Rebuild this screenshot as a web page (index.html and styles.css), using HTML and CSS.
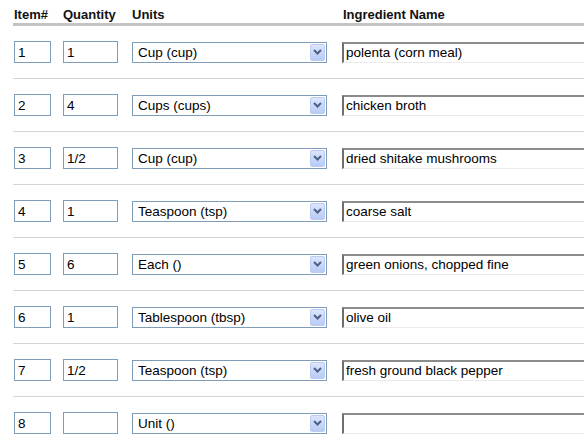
FILE: index.html
```html
<!DOCTYPE html>
<html>
<head>
<meta charset="utf-8">
<link rel="stylesheet" href="styles.css">
</head>
<body>
<div class="sheet">
  <div class="row head">
    <div class="h">Item#</div>
    <div class="h">Quantity</div>
    <div class="h">Units</div>
    <div class="h">Ingredient Name</div>
  </div>

  <div class="row">
    <input class="box item" value="1">
    <input class="box qty" value="1">
    <div class="sel"><span class="val">Cup (cup)</span><span class="btn"><svg width="9" height="6" viewBox="0 0 9 6"><path d="M1 1 L4.5 4.5 L8 1" fill="none" stroke="#4d6185" stroke-width="2"/></svg></span></div>
    <input class="name" value="polenta (corn meal)">
  </div>

  <div class="row">
    <input class="box item" value="2">
    <input class="box qty" value="4">
    <div class="sel"><span class="val">Cups (cups)</span><span class="btn"><svg width="9" height="6" viewBox="0 0 9 6"><path d="M1 1 L4.5 4.5 L8 1" fill="none" stroke="#4d6185" stroke-width="2"/></svg></span></div>
    <input class="name" value="chicken broth">
  </div>

  <div class="row">
    <input class="box item" value="3">
    <input class="box qty" value="1/2">
    <div class="sel"><span class="val">Cup (cup)</span><span class="btn"><svg width="9" height="6" viewBox="0 0 9 6"><path d="M1 1 L4.5 4.5 L8 1" fill="none" stroke="#4d6185" stroke-width="2"/></svg></span></div>
    <input class="name" value="dried shitake mushrooms">
  </div>

  <div class="row">
    <input class="box item" value="4">
    <input class="box qty" value="1">
    <div class="sel"><span class="val">Teaspoon (tsp)</span><span class="btn"><svg width="9" height="6" viewBox="0 0 9 6"><path d="M1 1 L4.5 4.5 L8 1" fill="none" stroke="#4d6185" stroke-width="2"/></svg></span></div>
    <input class="name" value="coarse salt">
  </div>

  <div class="row">
    <input class="box item" value="5">
    <input class="box qty" value="6">
    <div class="sel"><span class="val">Each ()</span><span class="btn"><svg width="9" height="6" viewBox="0 0 9 6"><path d="M1 1 L4.5 4.5 L8 1" fill="none" stroke="#4d6185" stroke-width="2"/></svg></span></div>
    <input class="name" value="green onions, chopped fine">
  </div>

  <div class="row">
    <input class="box item" value="6">
    <input class="box qty" value="1">
    <div class="sel"><span class="val">Tablespoon (tbsp)</span><span class="btn"><svg width="9" height="6" viewBox="0 0 9 6"><path d="M1 1 L4.5 4.5 L8 1" fill="none" stroke="#4d6185" stroke-width="2"/></svg></span></div>
    <input class="name" value="olive oil">
  </div>

  <div class="row">
    <input class="box item" value="7">
    <input class="box qty" value="1/2">
    <div class="sel"><span class="val">Teaspoon (tsp)</span><span class="btn"><svg width="9" height="6" viewBox="0 0 9 6"><path d="M1 1 L4.5 4.5 L8 1" fill="none" stroke="#4d6185" stroke-width="2"/></svg></span></div>
    <input class="name" value="fresh ground black pepper">
  </div>

  <div class="row last">
    <input class="box item" value="8">
    <input class="box qty" value="">
    <div class="sel"><span class="val">Unit ()</span><span class="btn"><svg width="9" height="6" viewBox="0 0 9 6"><path d="M1 1 L4.5 4.5 L8 1" fill="none" stroke="#4d6185" stroke-width="2"/></svg></span></div>
    <input class="name" value="">
  </div>
</div>
</body>
</html>
```
FILE: styles.css
```css
html, body {
  margin: 0;
  padding: 0;
  background: #ffffff;
  overflow: hidden;
}
body {
  font-family: "Liberation Sans", Arial, sans-serif;
  font-size: 13.5px;
  color: #000;
}
.sheet {
  margin-left: 13px;
  width: 571px;
  overflow: hidden;
}
.row {
  display: grid;
  grid-template-columns: 49px 69px 210px 1fr;
  align-items: center;
  padding: 15px 0 15px 1px;
  border-bottom: 1px solid #d4d4d4;
  height: 22px;
}
.row.last {
  border-bottom: none;
}
.row.head {
  height: 16px;
  padding: 7px 0 0 1px;
  border-bottom: 3px solid #c4c4c4;
  align-items: start;
}
.h {
  font-weight: bold;
  font-size: 13px;
  line-height: 16px;
  color: #111;
  white-space: nowrap;
}
.h:last-child {
  padding-left: 1px;
}
input {
  font-family: "Liberation Sans", Arial, sans-serif;
  font-size: 13.5px;
  color: #000;
  margin: 0;
  outline: none;
  box-sizing: border-box;
}
.box {
  height: 22px;
  border: 1px solid #7f9db9;
  padding: 0 3px;
  background: #fff;
}
.item { width: 37px; }
.qty { width: 55px; }
.sel {
  position: relative;
  box-sizing: border-box;
  width: 195px;
  height: 21px;
  border: 1px solid #7f9db9;
  display: flex;
  align-items: center;
  background: #fff;
}
.val {
  padding-left: 5px;
  flex: 1;
  white-space: nowrap;
}
.btn {
  width: 15px;
  height: 17px;
  margin-right: 1px;
  box-sizing: border-box;
  border: 1px solid #bccbf0;
  border-radius: 2px;
  background: linear-gradient(#dce6fc, #b7cbf7);
  display: flex;
  align-items: center;
  justify-content: center;
}
.name {
  width: 260px;
  height: 21px;
  border-style: solid;
  border-width: 2px 0 1px 2px;
  border-color: #8c8c8c #e8e8e8 #ebebeb #6e6e6e;
  padding: 0 2px;
  background: #fff;
}
```
